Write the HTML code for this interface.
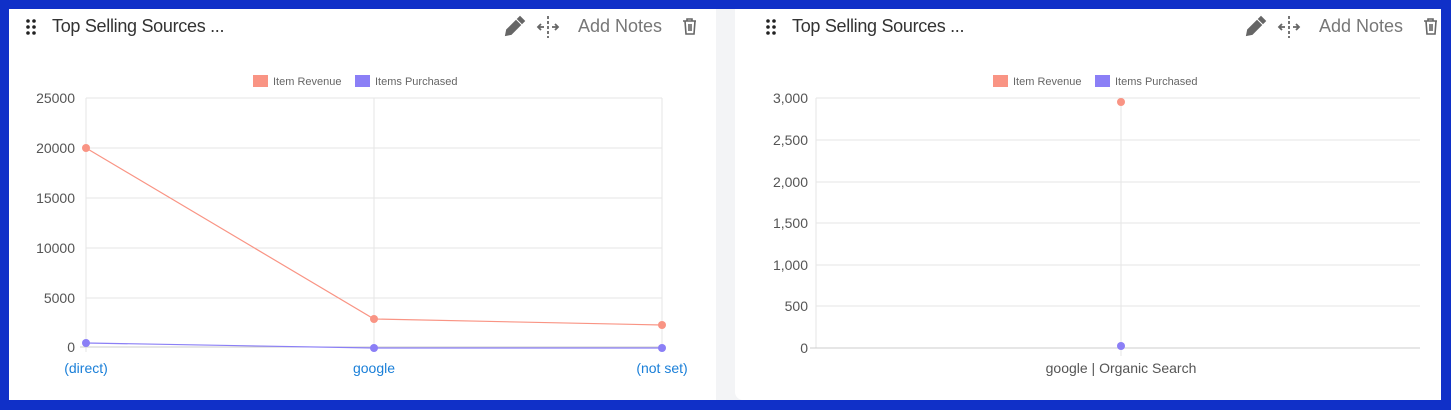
<!DOCTYPE html>
<html><head><meta charset="utf-8"><style>
body{margin:0;width:1451px;height:410px;background:#1030c8;position:relative;overflow:hidden;font-family:"Liberation Sans",sans-serif}
.gap{position:absolute;left:9px;top:9px;width:1432px;height:391px;background:#f3f4f6}
.p{position:absolute;top:9px;height:391px;background:#fff}
.t{position:absolute;top:16px;font-size:18px;color:#333;letter-spacing:-0.3px}
.an{position:absolute;top:16px;font-size:18px;color:#777}
svg text{font-family:"Liberation Sans",sans-serif}
</style></head><body>
<div class="gap"></div>
<div class="p" style="left:9px;width:707px"></div>
<div class="p" style="left:735px;width:706px;border-radius:0 0 0 8px"></div>
<div class="t" style="left:52px">Top Selling Sources ...</div>
<div class="t" style="left:792px">Top Selling Sources ...</div>
<div class="an" style="left:578px">Add Notes</div>
<div class="an" style="left:1319px">Add Notes</div>
<svg width="1451" height="410" style="position:absolute;left:0;top:0">
<g fill="#222">
<circle cx="28" cy="21" r="1.8"/><circle cx="34" cy="21" r="1.8"/><circle cx="28" cy="27" r="1.8"/><circle cx="34" cy="27" r="1.8"/><circle cx="28" cy="33" r="1.8"/><circle cx="34" cy="33" r="1.8"/>
<circle cx="768" cy="21" r="1.8"/><circle cx="774" cy="21" r="1.8"/><circle cx="768" cy="27" r="1.8"/><circle cx="774" cy="27" r="1.8"/><circle cx="768" cy="33" r="1.8"/><circle cx="774" cy="33" r="1.8"/>
</g>
<g id="ic" fill="none" stroke="#666" stroke-width="1.8">
<path d="M506 35 l1-5 l9-9 l4 4 l-9 9 z" fill="#666"/>
<path d="M518 19 l2-2 l4 4 l-2 2 z" fill="#666"/>
<path d="M548 16 v22" stroke-dasharray="3 2"/>
<path d="M538 27 h6 M541 24 l-3 3 l3 3 M552 27 h6 M555 24 l3 3 l-3 3"/>
<path d="M683 21 h13 M687 21 v-2 h5 v2 M685 21 l1 13 h8 l1-13 M689 24 v7 M691 24 v7" stroke-width="1.6"/>
</g>
<use href="#ic" x="741"/>
<!-- left chart -->
<rect x="253" y="75" width="15" height="12" fill="#f99484"/><text x="273" y="85" font-size="11" fill="#666">Item Revenue</text>
<rect x="355" y="75" width="15" height="12" fill="#8b7ff6"/><text x="375" y="85" font-size="11" fill="#666">Items Purchased</text>
<g stroke="#e5e5e5">
<path d="M86 98h576M86 148h576M86 198h576M86 248h576M86 298h576M374 98v254M662 98v254M86 98v254"/>
</g>
<path d="M80 347h582" stroke="#ccc"/>
<g font-size="14" fill="#555" text-anchor="end">
<text x="75" y="103">25000</text><text x="75" y="153">20000</text><text x="75" y="203">15000</text><text x="75" y="253">10000</text><text x="75" y="303">5000</text><text x="75" y="352">0</text>
</g>
<g font-size="14" fill="#1a7fd8" text-anchor="middle"><text x="86" y="373">(direct)</text><text x="374" y="373">google</text><text x="662" y="373">(not set)</text></g>
<polyline points="86,148 374,319 662,325" fill="none" stroke="#f99484" stroke-width="1.2"/>
<polyline points="86,343 374,348 662,348" fill="none" stroke="#8b7ff6" stroke-width="1.2"/>
<g fill="#f99484"><circle cx="86" cy="148" r="4"/><circle cx="374" cy="319" r="4"/><circle cx="662" cy="325" r="4"/></g>
<g fill="#8b7ff6"><circle cx="86" cy="343" r="4"/><circle cx="374" cy="348" r="4"/><circle cx="662" cy="348" r="4"/></g>
<!-- right chart -->
<rect x="993" y="75" width="15" height="12" fill="#f99484"/><text x="1013" y="85" font-size="11" fill="#666">Item Revenue</text>
<rect x="1095" y="75" width="15" height="12" fill="#8b7ff6"/><text x="1115" y="85" font-size="11" fill="#666">Items Purchased</text>
<g stroke="#e5e5e5"><path d="M816 98h604M816 140h604M816 182h604M816 223h604M816 265h604M816 306h604M816 98v250M1121 98v258"/></g>
<path d="M810 348h610" stroke="#ccc"/>
<g font-size="14" fill="#555" text-anchor="end">
<text x="808" y="103">3,000</text><text x="808" y="145">2,500</text><text x="808" y="187">2,000</text><text x="808" y="228">1,500</text><text x="808" y="270">1,000</text><text x="808" y="311">500</text><text x="808" y="353">0</text>
</g>
<text x="1121" y="373" font-size="14" fill="#555" text-anchor="middle">google | Organic Search</text>
<circle cx="1121" cy="102" r="4" fill="#f99484"/><circle cx="1121" cy="346" r="4" fill="#8b7ff6"/>
</svg>
</body></html>
